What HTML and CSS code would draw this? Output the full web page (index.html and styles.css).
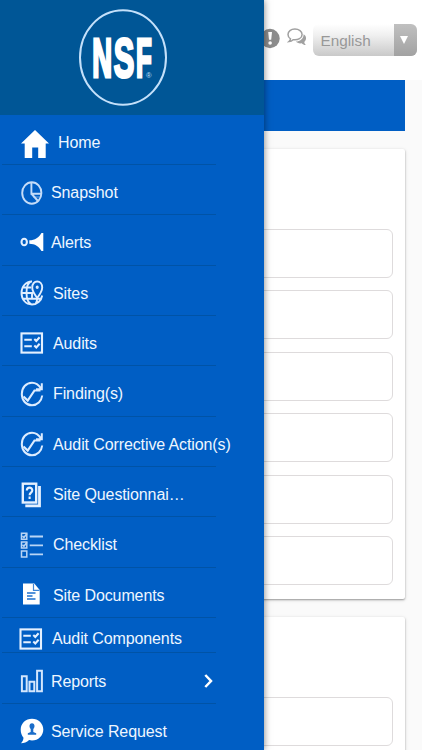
FILE: index.html
```
<!DOCTYPE html>
<html lang="en">
<head>
    <meta charset="UTF-8">
    <meta name="viewport" content="width=device-width, initial-scale=1.0">
    <title>NSF</title>
    <link rel="stylesheet" href="styles.css">
</head>
<body>
    <div class="page">
        <header class="topbar">
            <svg class="alert-icon" viewBox="0 0 20 20">
                <circle cx="10" cy="10" r="9.7" fill="#8c8c8c"/>
                <path d="M8.200 3.600h3.800l-.8 7.700H9z" fill="#fff"/>
                <circle cx="10.100" cy="14.500" r="1.800" fill="#fff"/>
            </svg>
            <svg class="chat-icon" viewBox="0 0 20 19">
                <path d="M16.600 6.300c3 1.700 3.300 5.500.7 7.600.1 1.300.8 2.400 1.700 3.200-1.700.1-3.200-.6-4.300-1.800-2.500.4-4.600-.3-5.900-1.700 4.200 0 7.900-2.900 7.800-7.300z" fill="#a0a0a0"/>
                <path d="M7.900 1C3.900 1 1 3.300 1 6.500c0 1.900.9 3.400 2.500 4.400-.2 1.100-.7 2-1.500 2.700 1.600-.1 3-.7 4.100-1.900 5 .7 9-1.600 9-5.200C15.100 3.300 11.900 1 7.900 1z" fill="#fff" stroke="#a0a0a0" stroke-width="1.500"/>
            </svg>
            <div class="language">
                <span class="language-name">English</span>
                <span class="language-arrow">
                    <svg width="8" height="8" viewBox="0 0 8 8"><path d="M0 0h8L4 8z" fill="#fff"/></svg>
                </span>
            </div>
        </header>

        <main class="content">
            <div class="banner"></div>
            <section class="card">
                <div class="field"></div>
                <div class="field"></div>
                <div class="field"></div>
                <div class="field"></div>
                <div class="field"></div>
                <div class="field"></div>
            </section>
            <section class="card">
                <div class="field"></div>
                <div class="field"></div>
            </section>
        </main>
    </div>

    <!-- Slide out menu -->
    <nav class="drawer">
        <div class="drawer-header">
            <svg class="logo" viewBox="0 0 88 97">
                <ellipse cx="44" cy="48.500" rx="43" ry="47.200" fill="none" stroke="#c4e0fa" stroke-width="2"/>
                <g class="logo-text">
                    <text transform="translate(13.300 67.500) scale(.5 1)">N</text>
                    <text transform="translate(34.800 67.500) scale(.56 1)">S</text>
                    <text transform="translate(57 67.500) scale(.47 1)">F</text>
                </g>
                <text class="logo-mark" x="67" y="68.500">®</text>
            </svg>
        </div>

        <ul class="menu">
            <li class="item home">
                <svg class="icon" width="28" height="28" viewBox="0 0 28 28">
                    <path d="M14 0l14 13.500h-3.300V28h-7.500V17.500h-6V28H3.700V13.500H0z" fill="#fff"/>
                </svg>
                <span>Home</span>
            </li>
            <li class="item near">
                <svg class="icon" width="24" height="24" viewBox="0 0 24 24" fill="none" stroke="#c5dcf8" stroke-width="1.900">
                    <ellipse cx="11.800" cy="12" rx="9.600" ry="10.700"/>
                    <path d="M11.400 1.200V12.700h10M11.700 13l6.300 7"/>
                    <path d="M13 16h7.500" stroke-width="1" opacity=".6"/>
                </svg>
                <span>Snapshot</span>
            </li>
            <li class="item near alerts">
                <svg class="icon" width="24" height="20" viewBox="0 0 24 20">
                    <ellipse cx="4.200" cy="10" rx="2.700" ry="3.300" fill="none" stroke="#e4f0ff" stroke-width="2.100"/>
                    <path d="M9.300 8.300C15 8.300 19 5.500 21.500 1H23.300v18h-1.800c-2.500-4.500-6.500-7.300-12.200-7.300z" fill="#fff"/>
                </svg>
                <span>Alerts</span>
            </li>
            <li class="item">
                <svg class="icon" width="24" height="26" viewBox="0 0 24 26" fill="none" stroke="#e0eeff" stroke-width="1.900">
                    <path d="M12 1.500C5.500 1.500 1.500 7 1.500 13s4 11.500 10.500 11.500c5 0 9.300-3.500 10.200-9M11.500 1.300C7.500 2.500 6.500 8 6.500 13s1.700 10 5.200 11.500M2.600 7.500H11M1.500 13h11.800M2.800 18.800h18.300M12 13v5.500M15.500 24c1-1.500 1.500-3 1.700-5"/>
                    <path d="M17.200 18c-3-4-5-7-5-10.500 0-3.600 2.200-6 5-6s5 2.400 5 6c0 3.500-2 6.500-5 10.500z" fill="#005ec4"/>
                    <ellipse cx="17.200" cy="7.200" rx=".8" ry="1" stroke-width="1.500"/>
                </svg>
                <span>Sites</span>
            </li>
            <li class="item up">
                <svg class="icon" width="24" height="22" viewBox="0 0 24 22" fill="none" stroke="#e4f0ff" stroke-width="2.100">
                    <rect x="1.500" y="1.400" width="20.500" height="19.200"/>
                    <path d="M4.300 7.800h7.500M4.300 14.200h7.500M14.300 7l2 1.900 3.300-3.600M14.300 13.500l2 1.900 3.300-3.600"/>
                </svg>
                <span>Audits</span>
            </li>
            <li class="item">
                <svg class="icon" width="24" height="26" viewBox="0 0 24 26" fill="none" stroke="#dcecff" stroke-width="2">
                    <path d="M21 7.500C18.500 3.500 15.500 1.700 12 1.700 6 1.700 1.800 6.800 1.800 13S6 24.300 12 24.300c5.300 0 9.500-4 10.200-9.800M21.800 2.300v5.900h-5.800"/>
                    <path d="M3.500 15.500l4.200 4 6.800-10h6" stroke-width="2.200"/>
                </svg>
                <span>Finding(s)</span>
            </li>
            <li class="item">
                <svg class="icon" width="24" height="26" viewBox="0 0 24 26" fill="none" stroke="#dcecff" stroke-width="2">
                    <path d="M21 7.500C18.500 3.500 15.500 1.700 12 1.700 6 1.700 1.800 6.800 1.800 13S6 24.300 12 24.300c5.300 0 9.500-4 10.200-9.800M21.800 2.300v5.900h-5.800"/>
                    <path d="M3.500 15.500l4.200 4 6.800-10h6" stroke-width="2.200"/>
                </svg>
                <span>Audit Corrective Action(s)</span>
            </li>
            <li class="item">
                <svg class="icon" width="24" height="26" viewBox="0 0 24 26" fill="none" stroke="#e4f0ff">
                    <rect x="2.800" y="1.700" width="13.400" height="18.800" stroke-width="2.400"/>
                    <path d="M19.500 4v19.800H5.300" stroke-width="2.800"/>
                    <path d="M6.800 8.500c.1-4 5.500-3.700 5.500-.3 0 2.500-2.700 2.300-2.700 5M9.600 14.500v2.400" stroke-width="2.100"/>
                </svg>
                <span>Site Questionnai…</span>
            </li>
            <li class="item">
                <svg class="icon" width="24" height="26" viewBox="0 0 24 26" fill="none" stroke="#b9d5f5" stroke-width="1.500">
                    <path d="M1.500 1.200h5.300v6H1.500zM1.500 10h5.300v6H1.500zM1.500 19h5.300v6H1.500z"/>
                    <path d="M2.500 4l1.400 1.500L7 1.500M2.500 12.800l1.400 1.500L7 10.300"/>
                    <path d="M9.700 4.500H23M9.700 13.300H23M9.700 22.300H23" stroke-width="1.800"/>
                </svg>
                <span>Checklist</span>
            </li>
            <li class="item up">
                <svg class="icon" width="24" height="22" viewBox="0 0 24 22">
                    <path d="M3 .5h11.300L19.700 7v14.500H3z" fill="#fff"/>
                    <path d="M13.500 1v6.300h6" fill="none" stroke="#3d85d6" stroke-width="1.200"/>
                    <path d="M7 10h8.500M7 13h5.500M7 16h8.500" stroke="#5593da" stroke-width="1.800"/>
                </svg>
                <span>Site Documents</span>
            </li>
            <li class="item short">
                <svg class="icon" width="24" height="22" viewBox="0 0 24 22" fill="none" stroke="#e4f0ff" stroke-width="2.100">
                    <rect x="1.500" y="1.400" width="20.500" height="19.200"/>
                    <path d="M4.300 7.800h7.500M4.300 14.200h7.500M14.300 7l2 1.900 3.300-3.600M14.300 13.500l2 1.900 3.300-3.600"/>
                </svg>
                <span>Audit Components</span>
            </li>
            <li class="item near">
                <svg class="icon" width="24" height="24" viewBox="0 0 24 24" fill="none" stroke="#d3e6fd" stroke-width="2">
                    <path d="M1.900 7.200h4.800v15H1.900zM9.500 12.800h4.800v9.400H9.500zM17.100 1.800h4.800v20.400h-4.800z"/>
                </svg>
                <span>Reports</span>
                <svg class="chevron" width="9" height="14" viewBox="0 0 9 14"><path d="M1.300 1l5.700 6-5.700 6" fill="none" stroke="#fff" stroke-width="2.500"/></svg>
            </li>
            <li class="item near">
                <svg class="icon" width="24" height="26" viewBox="0 0 24 26">
                    <path d="M12 .7c6.300 0 11.300 4.600 11.300 10.800S18.300 22.500 12 22.500c-1 0-2-.1-2.900-.4C6.800 24.300 4 25.300 1 25.300c1.500-1.500 2.400-3.300 2.500-5.500C1.700 17.700.7 14.800.7 11.500.7 5.300 5.700.7 12 .7z" fill="#fff"/>
                    <path d="M12 5.300c1.600 0 2.500 1.200 2.500 2.800 0 1.300-.6 2.200-1.200 3v2.900l2.900 1.200v1.600H7.800v-1.600l2.900-1.200v-2.900c-.6-.8-1.200-1.700-1.200-3 0-1.600.9-2.800 2.500-2.800z" fill="#1a6dc9"/>
                </svg>
                <span>Service Request</span>
            </li>
        </ul>
    </nav>
</body>
</html>
```
FILE: styles.css
```
* {
    box-sizing: border-box;
}
html, body {
    height: 100%;
}
body {
    margin: 0;
    font-family: "Liberation Sans", Arial, sans-serif;
    background-color: #fafafa;
    overflow: hidden;
}
.page {
    height: 750px;
    overflow: hidden;
}
.topbar {
    display: flex;
    align-items: center;
    justify-content: flex-end;
    height: 80px;
    padding-right: 5px;
    background-color: #fff;
}
.alert-icon {
    width: 20px;
    height: 21px;
    margin-right: 7px;
    margin-top: -3px;
}
.chat-icon {
    width: 20px;
    height: 19px;
    margin-right: 6px;
    margin-top: -5px;
}
.language {
    display: flex;
    width: 104px;
    height: 32px;
    border-radius: 6px;
    overflow: hidden;
    background: linear-gradient(#fff, #f0f0f0 35%, #c9c9c9);
}
.language-name {
    flex: 1;
    padding-left: 7.5px;
    font-size: 15.3px;
    line-height: 33px;
    color: #989898;
}
.language-arrow {
    display: flex;
    align-items: center;
    justify-content: center;
    width: 23px;
    padding-right: 3px;
    background: linear-gradient(#c0c0c0, #a2a2a2);
}
.content {
    padding: 0 17px;
}
.banner {
    height: 50.5px;
    margin-bottom: 18.5px;
    background-color: #005ec4;
}
.card {
    padding: 80px 12.5px 14px;
    margin-bottom: 18px;
    background-color: #fff;
    border-radius: 2px;
    box-shadow: 0 1px 2px rgba(0, 0, 0, 0.35), 0 1px 4px rgba(0, 0, 0, 0.1);
}
.field {
    height: 49px;
    border: 1px solid #dedbdc;
    border-radius: 6px;
}
.field + .field {
    margin-top: 12.4px;
}

/* Drawer */
.drawer {
    position: absolute;
    top: 0;
    left: 0;
    width: 264px;
    height: 750px;
    overflow: hidden;
    background-color: #005ec4;
    box-shadow: 0 0 7px rgba(0, 0, 0, 0.5);
}
.drawer-header {
    height: 114.5px;
    padding: 8.5px 0 0 79px;
    background-color: #005696;
}
.logo {
    display: block;
    width: 88px;
    height: 97px;
}
.logo-text {
    font-size: 55px;
    font-weight: bold;
    fill: #fff;
    stroke: #fff;
    stroke-width: 2.5px;
}
.logo-text text {
    vector-effect: non-scaling-stroke;
}
.logo-mark {
    font-size: 7.5px;
    fill: #c4e0fa;
}
.menu {
    list-style: none;
    margin: 0;
    padding: 0 0 0 2px;
}
.item {
    display: flex;
    align-items: center;
    width: 214px;
    height: 50.35px;
    padding: 6px 0 0 18px;
    border-bottom: 1px solid #0053a6;
    font-size: 16px;
    letter-spacing: -0.11px;
    white-space: nowrap;
    color: #eef6ff;
}
.item span {
    padding-top: 1px;
}
.icon {
    flex: none;
    margin-right: 9px;
}
.near .icon {
    margin-right: 7px;
}
.home .icon {
    margin: 3px 9px 0 1px;
}
.up .icon,
.alerts .icon {
    margin-top: -2px;
}
.short {
    height: 35.5px;
    padding: 7px 0 0 17px;
}
.chevron {
    margin: 0 3px 0 auto;
}
```
